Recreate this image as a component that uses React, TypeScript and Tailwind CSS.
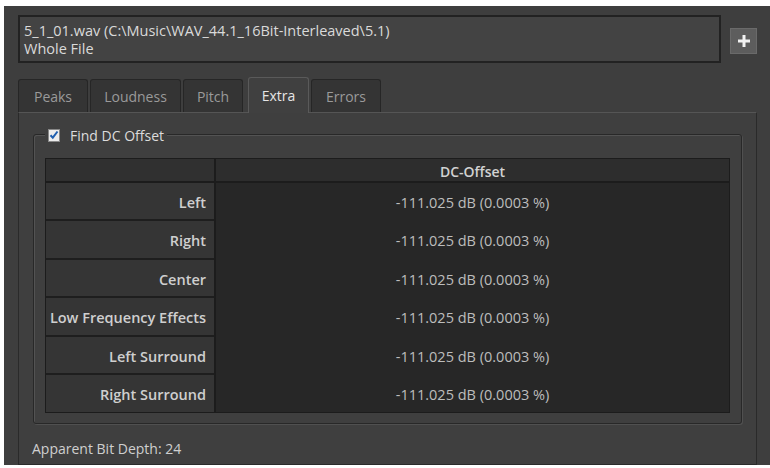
import React from "react";

const rows = ["Left", "Right", "Center", "Low Frequency Effects", "Left Surround", "Right Surround"];
const tabs = [
  { name: "Peaks", w: "w-[70px]" },
  { name: "Loudness", w: "w-[91px]" },
  { name: "Pitch", w: "w-[60px]" },
  { name: "Extra", w: "w-[61px]", active: true },
  { name: "Errors", w: "w-[70px]" },
];

export default function App() {
  return (
    <div className="w-[770px] h-[468px] bg-white pt-[6px] pl-[4px] font-['Open_Sans',sans-serif] text-[14px] overflow-hidden">
      <div className="w-[766px] h-[459px] bg-[#3e3e3e] pl-[14px] pt-[9px] flex flex-col">
        {/* source + add */}
        <div className="flex items-center gap-[9px]">
          <div className="w-[703px] h-[48px] border-2 border-[#222] bg-[#434343] px-[4px] pt-[5px] leading-[18px] text-[14.5px] text-[#dadada]">
            <div>5_1_01.wav (C:\Music\WAV_44.1_16Bit-Interleaved\5.1)</div>
            <div>Whole File</div>
          </div>
          <button className="mt-[4px] w-[27px] h-[26px] bg-[#5d5d5d] border border-[#6a6a6a] flex items-center justify-center">
            <svg width="14" height="14" viewBox="0 0 14 14">
              <path d="M7 1v12M1 7h12" stroke="#f2f2f2" strokeWidth="3" />
            </svg>
          </button>
        </div>

        {/* tabs */}
        <div className="mt-[13px] flex items-end gap-[2px] h-[36px]">
          {tabs.map((t) =>
            t.active ? (
              <div
                key={t.name}
                className={`${t.w} ml-[3px] h-[36px] -mb-px relative z-10 rounded-t-[3px] border border-b-0 border-[#5a5a5a] bg-[#404040] text-[#e6e6e6] flex items-center justify-center`}
              >
                {t.name}
              </div>
            ) : (
              <div
                key={t.name}
                className={`${t.w} h-[33px] rounded-t-[3px] border border-b-0 border-[#262626] bg-[#343434] text-[#9a9a9a] flex items-center justify-center`}
              >
                {t.name}
              </div>
            )
          )}
        </div>

        {/* tab pane */}
        <div className="w-[739px] flex-1 border border-[#2a2a2a] border-t-[#555] bg-[#3f3f3f] px-[14px] pt-[21px] flex flex-col">
          <div className="relative h-[290px] rounded-[3px] border border-[#282828] shadow-[inset_1px_1px_0_#535353,1px_1px_0_#505050] pt-[23px] px-[11px] pb-[9px]">
            <div className="absolute -top-[9px] left-[11px] bg-[#3f3f3f] px-[3px] flex items-center gap-[10px] h-[18px]">
              <div className="w-[12px] h-[13px] bg-[#ececec] border border-[#888] flex items-center justify-center">
                <svg width="10" height="10" viewBox="0 0 10 10">
                  <path d="M1.5 5.2l2.3 2.5L8.5 1.5" stroke="#1f5fb0" strokeWidth="2" fill="none" />
                </svg>
              </div>
              <span className="text-[#dcdcdc]">Find DC Offset</span>
            </div>

            {/* table */}
            <div className="bg-[#1e1e1e] border border-[#1c1c1c] flex flex-col">
              <div className="flex h-[24px] border-b-2 border-[#1c1c1c]">
                <div className="w-[170px] bg-[#303030] border-r-2 border-[#1c1c1c]" />
                <div className="flex-1 bg-[#2d2d2d] flex items-center justify-center pt-[2px] font-semibold text-[#d2d2d2]">
                  DC-Offset
                </div>
              </div>
              <div className="flex">
                <div className="w-[170px] flex flex-col gap-[2px] border-r-2 border-[#1c1c1c]">
                  {rows.map((r, i) => (
                    <div
                      key={r}
                      className={`${i % 2 ? "h-[37px]" : "h-[36px]"} bg-[#353535] flex items-center justify-end pr-[8px] pt-[3px] text-[14.5px] font-semibold text-[#cfcfcf]`}
                    >
                      {r}
                    </div>
                  ))}
                </div>
                <div className="flex-1 bg-[#272727] flex flex-col gap-[2px]">
                  {rows.map((r, i) => (
                    <div
                      key={r}
                      className={`${i % 2 ? "h-[37px]" : "h-[36px]"} flex items-center justify-center pt-[3px] text-[14.5px] text-[#bdbdbd]`}
                    >
                      -111.025 dB (0.0003 %)
                    </div>
                  ))}
                </div>
              </div>
            </div>
          </div>
          <div className="mt-[14px] -ml-px text-[#cfcfcf]">Apparent Bit Depth: 24</div>
        </div>
      </div>
    </div>
  );
}
